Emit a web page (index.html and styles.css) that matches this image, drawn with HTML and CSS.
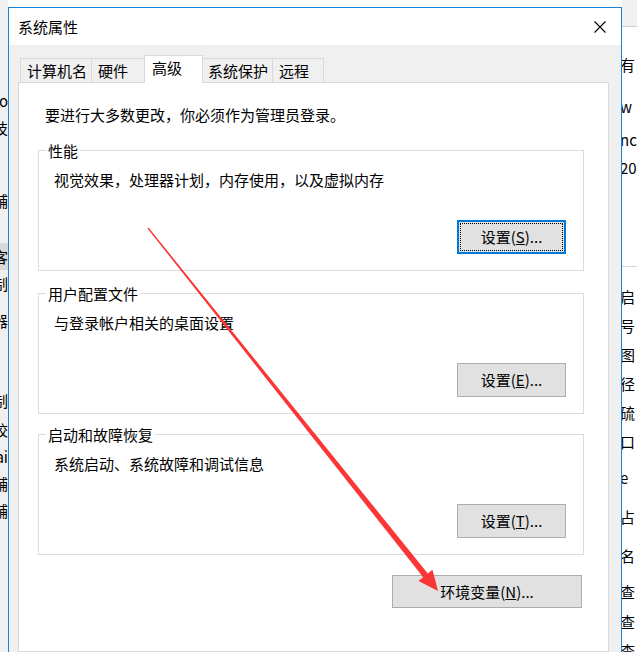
FILE: index.html
```html
<!DOCTYPE html>
<html lang="zh-CN">
<head>
<meta charset="utf-8">
<title>系统属性</title>
<link rel="stylesheet" href="styles.css">
</head>
<body>
<div class="desk">
  <div class="bg-left">
    <div class="bl-row">Fo</div>
    <div class="bl-row">技</div>
    <div class="bl-row m46">辅</div>
    <div class="bl-row m29 hl">客</div>
    <div class="bl-row">制</div>
    <div class="bl-row m10">器</div>
    <div class="bl-row m53">制</div>
    <div class="bl-row m2">校</div>
    <div class="bl-row">ai</div>
    <div class="bl-row">辅</div>
    <div class="bl-row">辅</div>
  </div>

  <div class="dialog">
    <div class="titlebar">
      <span class="title">系统属性</span>
      <svg class="close" width="12" height="12" viewBox="0 0 12 12"><path d="M0.5 0.5L11.5 11.5M11.5 0.5L0.5 11.5" stroke="#000" stroke-width="1.1" fill="none"/></svg>
    </div>
    <div class="dlg-body">
      <div class="tabs">
        <div class="tab t1">计算机名</div>
        <div class="tab t2">硬件</div>
        <div class="tab active">高级</div>
        <div class="tab t4">系统保护</div>
        <div class="tab t5">远程</div>
      </div>
      <div class="panel">
        <p class="note">要进行大多数更改，你必须作为管理员登录。</p>

        <div class="group g1">
          <span class="legend">性能</span>
          <p class="desc">视觉效果，处理器计划，内存使用，以及虚拟内存</p>
          <div class="btn-row"><button class="btn focused">设置(<u>S</u>)...</button></div>
        </div>

        <div class="group g2">
          <span class="legend">用户配置文件</span>
          <p class="desc">与登录帐户相关的桌面设置</p>
          <div class="btn-row"><button class="btn">设置(<u>E</u>)...</button></div>
        </div>

        <div class="group g3">
          <span class="legend">启动和故障恢复</span>
          <p class="desc">系统启动、系统故障和调试信息</p>
          <div class="btn-row"><button class="btn">设置(<u>T</u>)...</button></div>
        </div>

        <div class="env-row"><button class="btn env">环境变量(<u>N</u>)...</button></div>
      </div>
    </div>
  </div>

  <div class="bg-right">
    <div class="br-top"></div>
    <div class="br-upper">
      <div class="br-row u1">有</div>
      <div class="br-row u2">w</div>
      <div class="br-row u3">nc</div>
      <div class="br-row u4">20</div>
    </div>
    <div class="br-line"></div>
    <div class="br-lower">
      <div class="br-row">启</div>
      <div class="br-row">号</div>
      <div class="br-row">图</div>
      <div class="br-row">径</div>
      <div class="br-row">硫</div>
      <div class="br-row">口</div>
      <div class="br-row m7">e</div>
      <div class="br-row m10">占</div>
      <div class="br-row m10">名</div>
      <div class="br-row m7">查</div>
      <div class="br-row m1">查</div>
      <div class="br-row">查</div>
    </div>
  </div>
</div>

<svg class="arrow" width="637" height="652" viewBox="0 0 637 652">
  <polygon points="147.5,228.4 423.2,577.3 418.5,581.0 438,591 432.5,569.8 427.8,573.5 148.5,227.6" fill="#fb3636"/>
</svg>
</body>
</html>
```

FILE: styles.css
```css
html, body {
  margin: 0;
  padding: 0;
  overflow: hidden;
  background: #ffffff;
}

body {
  position: relative;
  width: 637px;
  height: 652px;
  font-family: "Noto Sans CJK SC", "Noto Sans", sans-serif;
  font-size: 15px;
  color: #000;
}

.desk {
  display: flex;
  align-items: flex-start;
  height: 652px;
  overflow: hidden;
}

/* background window strips */
.bg-left {
  flex: none;
  width: 8px;
  height: 652px;
  background: #f0f0f0;
  overflow: hidden;
  padding-top: 87px;
  box-sizing: border-box;
}

.bl-row {
  display: flex;
  justify-content: flex-end;
  height: 27px;
  line-height: 27px;
  white-space: nowrap;
}

.bl-row.hl {
  background: #d9d9d9;
}

.m46 { margin-top: 46px; }
.m29 { margin-top: 29px; }
.m10 { margin-top: 10px; }
.m53 { margin-top: 53px; }
.m7 { margin-top: 7px; }
.m2 { margin-top: 2px; }
.m1 { margin-top: 1px; }

.bg-right {
  flex: 1;
  height: 652px;
  background: #ffffff;
  overflow: hidden;
  white-space: nowrap;
}

.br-top {
  height: 26px;
  background: #f0f0f0;
  border-bottom: 1px solid #cfcfcf;
}

.br-upper {
  height: 211px;
}

.br-row {
  height: 20px;
  line-height: 20px;
  text-indent: -2px;
}

.u1 { margin-top: 28px; }
.u2 { margin-top: 22px; }
.u3 { margin-top: 13px; }
.u4 { margin-top: 8px; }

.br-line {
  height: 1px;
  background: #d5d5d5;
}

.br-lower {
  padding-top: 15px;
}

.br-lower .br-row {
  height: 29px;
  line-height: 29px;
}

/* dialog */
.dialog {
  flex: none;
  width: 614px;
  height: 645px;
  margin-top: 7px;
  box-sizing: border-box;
  border: 1px solid #1883d7;
  border-bottom: none;
  background: #f0f0f0;
}

.titlebar {
  display: flex;
  align-items: center;
  height: 37px;
  background: #ffffff;
  padding-left: 9px;
}

.title {
  line-height: 20px;
}

.close {
  margin-left: auto;
  margin-right: 15px;
}

.dlg-body {
  padding: 10px 12px 0 9px;
}

.tabs {
  display: flex;
  align-items: flex-end;
  height: 27px;
  padding-left: 2px;
}

.tab {
  box-sizing: border-box;
  height: 24px;
  border: 1px solid #d9d9d9;
  border-bottom: none;
  background: #f0f0f0;
  margin-right: -1px;
  padding-left: 6px;
  padding-top: 1px;
  line-height: 22px;
  white-space: nowrap;
}

.t1 { width: 72px; }
.t2 { width: 56px; }
.t4 { width: 72px; }
.t5 { width: 52px; }

.tab.active {
  width: 59px;
  height: 28px;
  margin-left: -2px;
  margin-right: -2px;
  margin-bottom: -1px;
  padding-left: 7px;
  background: #ffffff;
  position: relative;
  z-index: 1;
}

.panel {
  box-sizing: border-box;
  height: 570px;
  border: 1px solid #d9d9d9;
  background: #ffffff;
}

.note {
  margin: 0;
  padding: 22px 0 0 26px;
  line-height: 20px;
}

.group {
  box-sizing: border-box;
  height: 121px;
  margin: 0 24px 0 19px;
  border: 1px solid #dcdcdc;
}

.g1 { margin-top: 25px; }
.g2 { margin-top: 22px; }
.g3 { margin-top: 20px; }

.legend {
  display: block;
  width: fit-content;
  margin: -10px 0 0 7px;
  padding: 0 2px;
  background: #ffffff;
  line-height: 20px;
}

.desc {
  margin: 9px 0 0 15px;
  line-height: 20px;
}

.btn-row {
  display: flex;
  justify-content: flex-end;
  margin-top: 30px;
  padding-right: 17px;
}

.btn {
  box-sizing: border-box;
  width: 109px;
  height: 34px;
  padding: 0;
  border: 1px solid #adadad;
  background: #e1e1e1;
  font-family: "Noto Sans CJK SC", "Noto Sans", sans-serif;
  font-size: 15px;
  color: #000;
  line-height: 20px;
}

.btn.focused {
  border: 2px solid #0078d7;
  outline: 1px dotted #000;
  outline-offset: -4px;
}

.env-row {
  display: flex;
  justify-content: flex-end;
  margin: 20px 26px 0 0;
}

.btn.env {
  width: 190px;
  height: 33px;
}

.arrow {
  position: absolute;
  left: 0;
  top: 0;
  pointer-events: none;
}
```
